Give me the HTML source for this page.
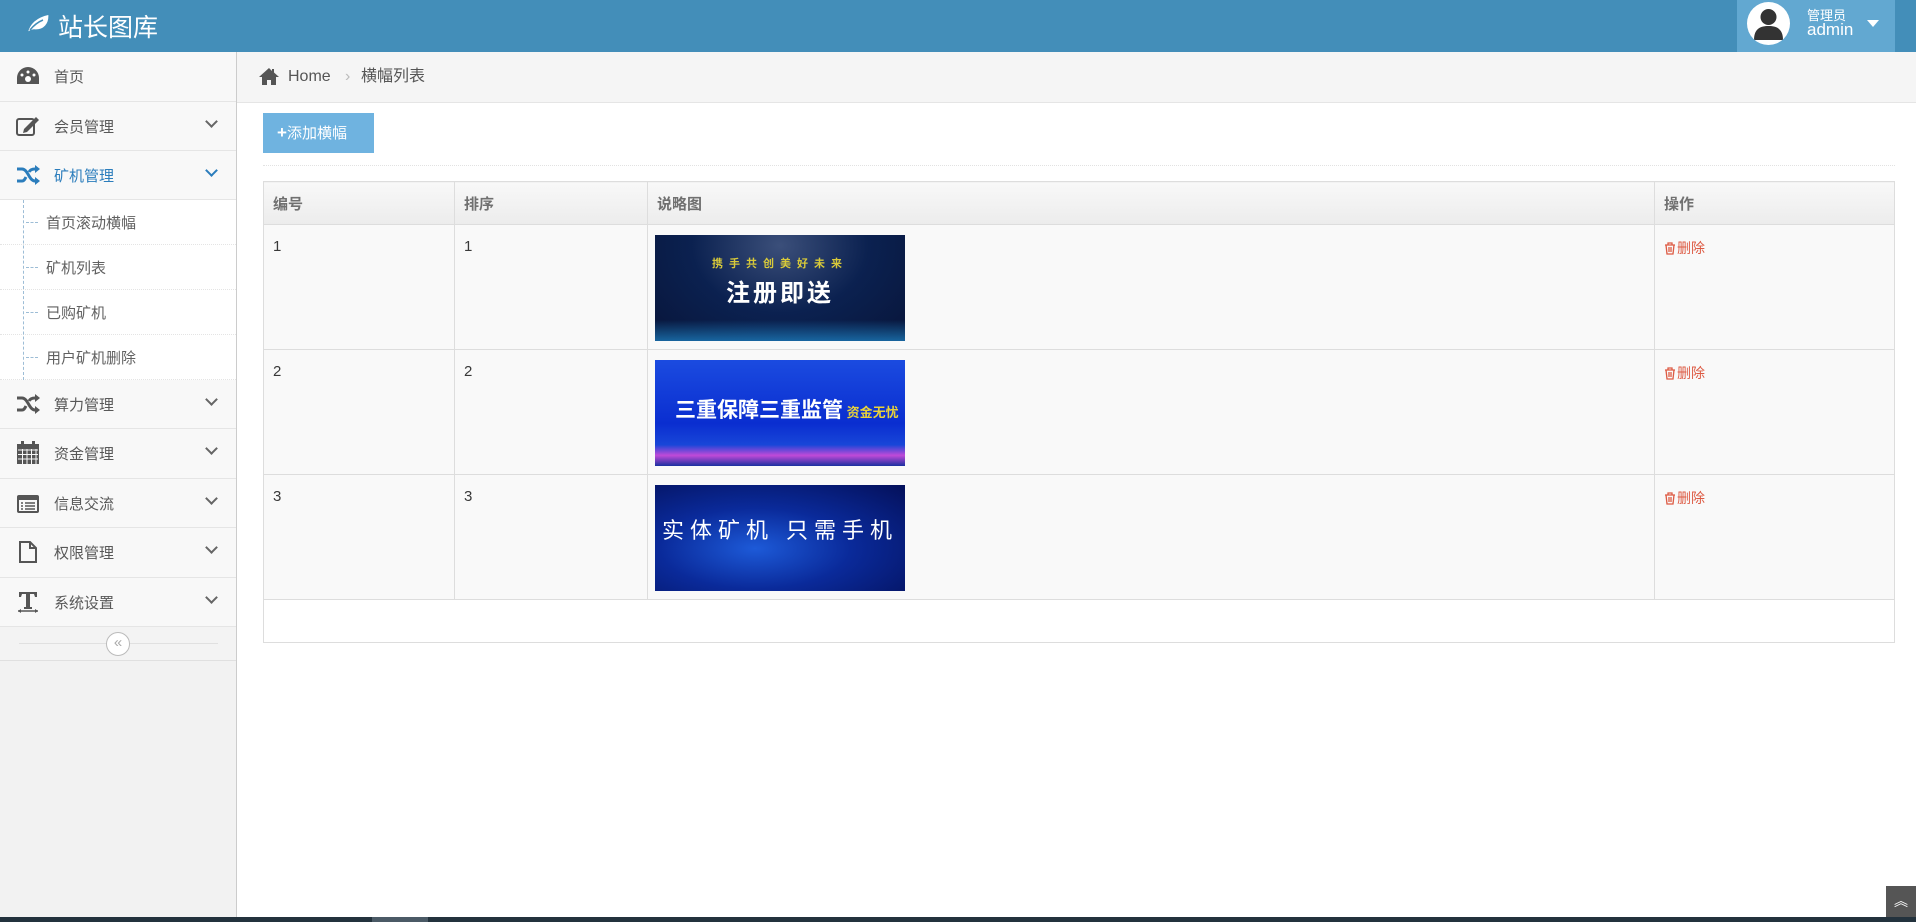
<!DOCTYPE html>
<html><head><meta charset="utf-8"><style>
*{margin:0;padding:0;box-sizing:border-box}
body{width:1916px;height:922px;overflow:hidden;background:#fff;font-family:"Liberation Sans","Noto Sans CJK SC",sans-serif;color:#393939;position:relative}
.hdr{position:absolute;left:0;top:0;width:1916px;height:52px;background:#438eb9}
.logo{position:absolute;left:58px;top:8px;color:#fff;font-size:25px}
.user{position:absolute;left:1737px;top:0;width:158px;height:52px;background:#62a8d1}
.av{position:absolute;left:10px;top:2px;width:43px;height:43px;border-radius:50%;background:#fff;overflow:hidden}
.user .t1{position:absolute;left:70px;top:5px;color:#fff;font-size:13px}
.user .t2{position:absolute;left:70px;top:20px;color:#fff;font-size:17px}
.caret{position:absolute;left:130px;top:20px;border-left:6px solid transparent;border-right:6px solid transparent;border-top:7px solid #fff}
.side{position:absolute;left:0;top:52px;width:237px;height:865px;background:#f2f2f2;border-right:1px solid #ccc}
.mi{position:absolute;left:0;width:236px;background:#f8f8f8;border-bottom:1px solid #e5e5e5;font-size:15px;color:#585858}
.mi span{position:absolute;left:54px}
.mi .ic{position:absolute;left:16px}
.mi .ch{position:absolute;left:207px;width:9px;height:9px;border-right:2px solid #666;border-bottom:2px solid #666;transform:rotate(45deg)}
.sub{position:absolute;left:0;width:236px;height:45px;background:#fff;border-bottom:1px dotted #e4e4e4;font-size:15px;color:#616161}
.sub span{position:absolute;left:46px;top:12px}
.sub i{position:absolute;left:26px;top:22px;width:12px;border-top:1px dashed #9dbdd6}
.crumb{position:absolute;left:237px;top:52px;width:1679px;height:51px;background:#f5f5f5;border-bottom:1px solid #e5e5e5;font-size:16px;color:#555}
.crumb span{position:absolute;top:15px;line-height:20px}
table{position:absolute;left:263px;top:181px;width:1632px;border-collapse:collapse;font-size:15px;color:#393939}
td,th{border:1px solid #ddd;vertical-align:top;text-align:left;padding:0 9px;background:#f9f9f9}
th{height:43px;background:linear-gradient(#f8f8f8,#ececec);font-weight:bold;color:#707070;vertical-align:middle}
td{height:125px;padding-top:13px}
.del{color:#dd5a43;font-size:14px}
.del svg{vertical-align:-2px;margin-right:1px}
.ban{width:250px;height:106px;margin-top:-3px;margin-left:-2px;position:relative;overflow:hidden;color:#fff;font-weight:bold;text-align:center;white-space:nowrap}
</style></head><body>
<div class="hdr">
<svg style="position:absolute;left:25px;top:12px" width="26" height="22" viewBox="0 0 26 22"><path d="M2 21C4 12 10 5 24 2C25 12 19 19 9 18C7 18 5 19 2 21Z M5 18C9 13 13 10 18 8" fill="#fff" stroke="#438eb9" stroke-width="1.5"/></svg>
<div class="logo">站长图库</div>
<div class="user"><div class="av"><svg width="43" height="43" viewBox="0 0 43 43"><circle cx="21.5" cy="15" r="8" fill="#333"/><path d="M7 38C7 27 13 24 21.5 24S36 27 36 38Z" fill="#333"/></svg></div>
<div class="t1">管理员</div><div class="t2">admin</div><div class="caret"></div></div>
</div>
<div class="side">
<div class="mi" style="top:0;height:50px"><svg class="ic" style="top:14px" width="24" height="20" viewBox="0 0 24 20"><path d="M12 1A11 11 0 0 0 1 12v6h22v-6A11 11 0 0 0 12 1z" fill="#555"/><circle cx="12" cy="13" r="3" fill="#fff"/><circle cx="6" cy="9" r="1.5" fill="#fff"/><circle cx="12" cy="6" r="1.5" fill="#fff"/><circle cx="18" cy="9" r="1.5" fill="#fff"/></svg><span style="top:14px">首页</span></div>
<div class="mi" style="top:50px;height:49px"><svg class="ic" style="top:14px" width="24" height="20" viewBox="0 0 24 20"><rect x="1" y="3" width="17" height="16" rx="2" fill="none" stroke="#555" stroke-width="2"/><path d="M8 13L20 1L23 4L11 16L7 17Z" fill="#555"/></svg><span style="top:14px">会员管理</span><i class="ch" style="top:15px"></i></div>
<div class="mi" style="top:99px;height:49px;color:#2b7dbc"><svg class="ic" style="top:14px" width="24" height="20" viewBox="0 0 24 20"><path d="M1 4h5c6 0 7 12 13 12h2M1 16h5c2 0 3-2 4-4M13 7c1-2 3-3 6-3h2" fill="none" stroke="#2b7dbc" stroke-width="3"/><path d="M19 0l5 4-5 4zM19 12l5 4-5 4z" fill="#2b7dbc"/></svg><span style="top:14px">矿机管理</span><i class="ch" style="top:15px;border-color:#2b7dbc"></i></div>
<div class="sub" style="top:148px"><i></i><span>首页滚动横幅</span></div>
<div class="sub" style="top:193px"><i></i><span>矿机列表</span></div>
<div class="sub" style="top:238px"><i></i><span>已购矿机</span></div>
<div class="sub" style="top:283px"><i></i><span>用户矿机删除</span></div>
<div style="position:absolute;left:23px;top:148px;height:180px;border-left:1px dashed #9dbdd6"></div>
<div class="mi" style="top:328px;height:49px"><svg class="ic" style="top:14px" width="24" height="20" viewBox="0 0 24 20"><path d="M1 4h5c6 0 7 12 13 12h2M1 16h5c2 0 3-2 4-4M13 7c1-2 3-3 6-3h2" fill="none" stroke="#555" stroke-width="3"/><path d="M19 0l5 4-5 4zM19 12l5 4-5 4z" fill="#555"/></svg><span style="top:14px">算力管理</span><i class="ch" style="top:15px"></i></div>
<div class="mi" style="top:377px;height:50px"><svg class="ic" style="top:12px" width="24" height="24" viewBox="0 0 24 24"><rect x="1" y="3" width="22" height="20" fill="#555"/><path d="M2 9h20M2 13.5h20M2 18h20M6.5 8v15M11 8v15M15.5 8v15M20 8v15" stroke="#f8f8f8" stroke-width="1"/><rect x="5" y="0" width="3" height="6" fill="#555"/><rect x="16" y="0" width="3" height="6" fill="#555"/></svg><span style="top:14px">资金管理</span><i class="ch" style="top:15px"></i></div>
<div class="mi" style="top:427px;height:49px"><svg class="ic" style="top:15px" width="24" height="20" viewBox="0 0 24 20"><rect x="1" y="1" width="22" height="18" rx="2" fill="#555"/><rect x="3" y="6" width="18" height="11" fill="#f8f8f8"/><path d="M5 9h2M9 9h10M5 12h2M9 12h10M5 15h2M9 15h10" stroke="#555" stroke-width="1.5"/></svg><span style="top:14px">信息交流</span><i class="ch" style="top:15px"></i></div>
<div class="mi" style="top:476px;height:50px"><svg class="ic" style="top:13px" width="24" height="22" viewBox="0 0 24 22"><path d="M4 1h10l6 6v14H4Z M14 1v6h6" fill="none" stroke="#555" stroke-width="2"/></svg><span style="top:14px">权限管理</span><i class="ch" style="top:15px"></i></div>
<div class="mi" style="top:526px;height:49px"><svg class="ic" style="top:13px" width="24" height="22" viewBox="0 0 24 22"><path d="M3 1h18v5h-2l-1-3h-4v13h2v2H8v-2h2V3H6L5 6H3Z" fill="#555"/><path d="M2 20h20" stroke="#555" stroke-width="1.5"/><path d="M2 20l3-2v4zM22 20l-3-2v4z" fill="#555"/></svg><span style="top:14px">系统设置</span><i class="ch" style="top:15px"></i></div>
<div style="position:absolute;left:0;top:575px;width:236px;height:34px;background:#f3f3f3;border-bottom:1px solid #e0e0e0"><div style="position:absolute;left:19px;top:16px;width:199px;border-top:1px solid #e0e0e0"></div><div style="position:absolute;left:106px;top:5px;width:24px;height:24px;border-radius:50%;background:#fff;border:1px solid #bbb;color:#aaa;font-size:15px;text-align:center;line-height:20px">«</div></div>
</div>
<div class="crumb"><svg style="position:absolute;left:21px;top:15px" width="22" height="18" viewBox="0 0 20 18"><path d="M10 1L0 10h3v8h5v-5h4v5h5v-8h3L15 5.5V2h-2v2Z" fill="#555"/></svg><span style="left:51px">Home</span><span style="left:108px;color:#bbb">›</span><span style="left:124px">横幅列表</span></div>
<div style="position:absolute;left:263px;top:113px;width:111px;height:40px;background:#6fb3e0;color:#fff;font-size:15px;line-height:40px;padding-left:14px"><b style="font-size:17px">+</b>添加横幅</div>
<div style="position:absolute;left:263px;top:165px;width:1632px;border-top:1px dotted #e2e2e2"></div>
<table>
<tr><th style="width:191px">编号</th><th style="width:193px">排序</th><th style="width:1007px">说略图</th><th>操作</th></tr>
<tr><td>1</td><td>1</td><td><div class="ban" style="background:radial-gradient(ellipse at 50% 10%,#3b4f7a,#0b2150 50%,#08153a);"><div style="color:#d7c93a;font-size:11px;margin-top:20px;letter-spacing:6px">携手共创美好未来</div><div style="font-size:24px;margin-top:2px;letter-spacing:3px">注册即送</div><div style="height:28px;background:linear-gradient(transparent,#1d7fbf);margin-top:12px"></div></div></td><td><span class="del"><svg width="12" height="13" viewBox="0 0 12 13"><path d="M1 3h10M4 3V1h4v2M2 3l1 9h6l1-9M5 5v5M7 5v5" fill="none" stroke="#dd5a43" stroke-width="1.3"/></svg>删除</span></td></tr>
<tr><td>2</td><td>2</td><td><div class="ban" style="background:linear-gradient(#1b4be0,#0a2ed0 60%,#1846d8 80%,#c04ad8 90%,#1a30a0);"><div style="font-size:21px;margin-top:34px;text-align:left;padding-left:20px">三重保障三重监管<span style="color:#e8d23a;font-size:13px"> 资金无忧</span></div></div></td><td><span class="del"><svg width="12" height="13" viewBox="0 0 12 13"><path d="M1 3h10M4 3V1h4v2M2 3l1 9h6l1-9M5 5v5M7 5v5" fill="none" stroke="#dd5a43" stroke-width="1.3"/></svg>删除</span></td></tr>
<tr><td>3</td><td>3</td><td><div class="ban" style="background:radial-gradient(ellipse at 40% 60%,#1d5ad8,#0a2a9a 45%,#04105a);"><div style="font-size:22px;margin-top:28px;font-weight:normal;letter-spacing:6px">实体矿机 只需手机</div></div></td><td><span class="del"><svg width="12" height="13" viewBox="0 0 12 13"><path d="M1 3h10M4 3V1h4v2M2 3l1 9h6l1-9M5 5v5M7 5v5" fill="none" stroke="#dd5a43" stroke-width="1.3"/></svg>删除</span></td></tr>
<tr><td colspan="4" style="height:43px;background:#fff"></td></tr>
</table>
<div style="position:absolute;left:1886px;top:886px;width:30px;height:31px;background:#555;color:#fff;text-align:center;font-size:14px;line-height:30px">︽</div>
<div style="position:absolute;left:0;top:917px;width:1916px;height:5px;background:#23323d"><div style="position:absolute;left:372px;width:56px;height:5px;background:#4b5a66"></div></div>
</body></html>
